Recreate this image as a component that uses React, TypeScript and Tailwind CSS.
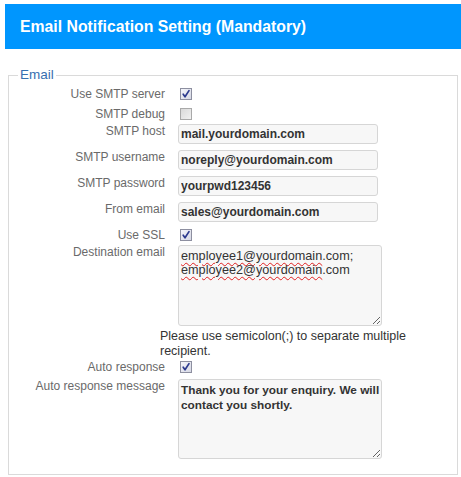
import React from 'react';

function Box({ checked }: { checked?: boolean }) {
  return (
    <span
      className={
        'ml-[2px] flex h-[12px] w-[12px] items-center justify-center border ' +
        (checked
          ? 'border-[#8d8fa0] bg-gradient-to-br from-[#f4f5fb] to-[#d6d8e4]'
          : 'border-[#a9a9a9] bg-gradient-to-br from-[#d9d9d9] to-[#f1f1f1]')
      }
    >
      {checked && (
        <svg width="10" height="10" viewBox="0 0 10 10">
          <path d="M2.2 5.2 L4 7.8 L8 1.6" fill="none" stroke="#2c3a8e" strokeWidth="1.7" strokeLinecap="round" strokeLinejoin="round" />
        </svg>
      )}
    </span>
  );
}

function Row({ label, className = '', children }: { label: string; className?: string; children: React.ReactNode }) {
  return (
    <div className={'flex items-start ' + className}>
      <label className="w-[156px] shrink-0 text-right text-[12px] leading-[14px] text-[#6a6a6a]">{label}</label>
      <div className="ml-[13px] flex items-center">{children}</div>
    </div>
  );
}

function CheckRow({ label, checked, className = '' }: { label: string; checked?: boolean; className?: string }) {
  return (
    <div className={'flex h-[14px] items-center ' + className}>
      <label className="w-[156px] shrink-0 text-right text-[12px] leading-[14px] text-[#6a6a6a]">{label}</label>
      <div className="ml-[13px] flex items-center">
        <Box checked={checked} />
      </div>
    </div>
  );
}

function Field({ value }: { value: string }) {
  return (
    <input
      readOnly
      value={value}
      className="h-[20px] w-[200px] rounded-[3px] border border-[#d6d6d6] bg-[#f7f7f7] px-[2px] text-[12px] font-bold text-[#333] outline-none"
    />
  );
}

export default function App() {
  return (
    <div className="min-h-screen bg-white pl-[5px] pt-[4px] font-['Liberation_Sans',Arial,sans-serif]">
      {/* title bar */}
      <div className="flex h-[45px] items-center bg-[#0096fe] pl-[15px]">
        <h1 className="text-[15.8px] font-bold text-white">Email Notification Setting (Mandatory)</h1>
      </div>

      <fieldset className="mx-[3px] mt-[18px] border border-[#dadada] pb-[15px]">
        <legend className="ml-[9px] px-[2px] text-[13.5px] leading-[16px] text-[#3770b0]">Email</legend>

        <CheckRow label="Use SMTP server" checked className="mt-[4px]" />
        <CheckRow label="SMTP debug" className="mt-[6px]" />
        <Row label="SMTP host" className="mt-[3px]">
          <Field value="mail.yourdomain.com" />
        </Row>
        <Row label="SMTP username" className="mt-[6px]">
          <Field value="noreply@yourdomain.com" />
        </Row>
        <Row label="SMTP password" className="mt-[6px]">
          <Field value="yourpwd123456" />
        </Row>
        <Row label="From email" className="mt-[6px]">
          <Field value="sales@yourdomain.com" />
        </Row>
        <CheckRow label="Use SSL" checked className="mt-[6px]" />
        <Row label="Destination email" className="mt-[3px]">
          <div className="h-[81px] w-[204px] resize overflow-hidden rounded-[3px] border border-[#d6d6d6] bg-[#f7f7f7] px-[2px] pt-[3px] text-[12.7px] leading-[14px] text-[#333]">
            <span className="underline decoration-[#e02020] decoration-wavy decoration-1 underline-offset-2">employee1@yourdomain</span>.com;
            <br />
            <span className="underline decoration-[#e02020] decoration-wavy decoration-1 underline-offset-2">employee2@yourdomain</span>.com
          </div>
        </Row>
        <p className="ml-[151px] mt-[3px] max-w-[265px] text-[12.5px] leading-[14.5px] text-[#333]">
          Please use semicolon(;) to separate multiple recipient.
        </p>
        <CheckRow label="Auto response" checked className="mt-[2px]" />
        <Row label="Auto response message" className="mt-[5px]">
          <textarea
            readOnly
            value={'Thank you for your enquiry. We will\ncontact you shortly.'}
            className="h-[80px] w-[204px] overflow-hidden whitespace-pre rounded-[3px] border border-[#d6d6d6] bg-[#f7f7f7] px-[2px] pt-[3px] text-[11.8px] font-bold leading-[15px] text-[#333] outline-none"
          />
        </Row>
      </fieldset>
    </div>
  );
}
